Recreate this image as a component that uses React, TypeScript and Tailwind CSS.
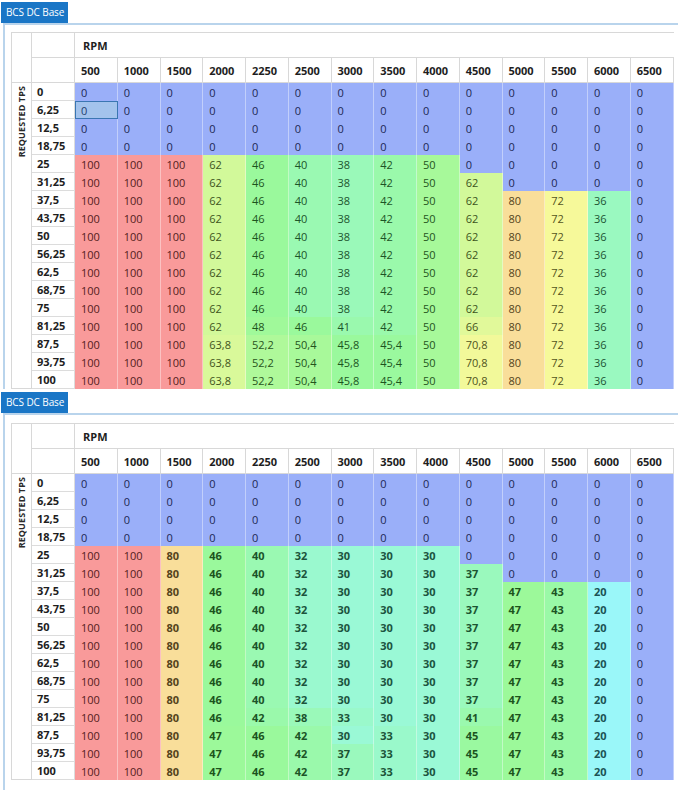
import React from "react";

const RPM = [500, 1000, 1500, 2000, 2250, 2500, 3000, 3500, 4000, 4500, 5000, 5500, 6000, 6500];
const TPS = ["0", "6,25", "12,5", "18,75", "25", "31,25", "37,5", "43,75", "50", "56,25", "62,5", "68,75", "75", "81,25", "87,5", "93,75", "100"];

const Z = [0, 0, 0, 0, 0, 0, 0, 0, 0, 0, 0, 0, 0, 0];

const topMid = [100, 100, 100, 62, 46, 40, 38, 42, 50, 62, 80, 72, 36, 0];
const topLate = [100, 100, 100, 63.8, 52.2, 50.4, 45.8, 45.4, 50, 70.8, 80, 72, 36, 0];
const TOP: number[][] = [
  Z, Z, Z, Z,
  [100, 100, 100, 62, 46, 40, 38, 42, 50, 0, 0, 0, 0, 0],
  [100, 100, 100, 62, 46, 40, 38, 42, 50, 62, 0, 0, 0, 0],
  topMid, topMid, topMid, topMid, topMid, topMid, topMid,
  [100, 100, 100, 62, 48, 46, 41, 42, 50, 66, 80, 72, 36, 0],
  topLate, topLate, topLate,
];

const botMid = [100, 100, 80, 46, 40, 32, 30, 30, 30, 37, 47, 43, 20, 0];
const BOT: number[][] = [
  Z, Z, Z, Z,
  [100, 100, 80, 46, 40, 32, 30, 30, 30, 0, 0, 0, 0, 0],
  [100, 100, 80, 46, 40, 32, 30, 30, 30, 37, 0, 0, 0, 0],
  botMid, botMid, botMid, botMid, botMid, botMid, botMid,
  [100, 100, 80, 46, 42, 38, 33, 30, 30, 41, 47, 43, 20, 0],
  [100, 100, 80, 47, 46, 42, 30, 33, 30, 45, 47, 43, 20, 0],
  [100, 100, 80, 47, 46, 42, 37, 33, 30, 45, 47, 43, 20, 0],
  [100, 100, 80, 47, 46, 42, 37, 33, 30, 45, 47, 43, 20, 0],
];

const hue = (v: number) => Math.max(0, 227 - 2.3 * v);
const bg = (v: number) => `hsl(${hue(v)} 88% 79%)`;
const fg = (v: number) => `hsl(${hue(v)} 50% 22%)`;
const fmt = (v: number) => String(v).replace(".", ",");

function Table({ data, boldMode, selected }: { data: number[][]; boldMode: boolean; selected?: [number, number] }) {
  return (
    <div className="grid grid-cols-[21px_43px_repeat(14,42.75px)] grid-rows-[26px_25px_repeat(17,18px)] text-[11px] leading-none text-[#1e1e1e]">
      <div className="row-span-2 border-l border-t border-r border-b border-[#d8d8d8]" />
      <div className="border-t border-r border-b border-[#d8d8d8]" />
      <div className="col-span-14 border-t border-b border-[#d8d8d8] flex items-center pl-[8px] font-bold">RPM</div>
      <div className="border-r border-b border-[#d8d8d8]" />
      {RPM.map((r) => (
        <div key={r} className="border-r border-b border-[#d8d8d8] flex items-center pl-[6px] font-bold">
          {r}
        </div>
      ))}
      <div className="row-span-17 border-l border-r border-b border-[#d8d8d8] flex flex-col items-center pt-[3px]">
        <span className="[writing-mode:vertical-rl] rotate-180 text-[9px] font-bold tracking-[0.1px] text-[#2a2a2a]">REQUESTED TPS</span>
      </div>
      {TPS.map((t, i) => (
        <React.Fragment key={t}>
          <div className="border-r border-b border-[#dcdcdc] flex items-center pl-[5px] font-bold">{t}</div>
          {data[i].map((v, j) => {
            const isSel = selected && selected[0] === i && selected[1] === j;
            const bold = boldMode && v !== 0 && v !== 100;
            if (isSel) {
              return (
                <div key={j} className="border border-[#3a76b2] bg-[#a3c3ec] text-[#24406e] flex items-center pl-[5px]">
                  {fmt(v)}
                </div>
              );
            }
            return (
              <div
                key={j}
                className={bold ? "border-r border-white/40 flex items-center pl-[6px] font-bold" : "border-r border-white/40 flex items-center pl-[6px]"}
                style={{ background: bg(v), color: fg(v) }}
              >
                {fmt(v)}
              </div>
            );
          })}
        </React.Fragment>
      ))}
    </div>
  );
}

function Tab() {
  return (
    <div className="ml-[1px] w-[67px] h-[21px] bg-[#1a76c6] text-white text-[10px] tracking-[-0.1px] flex items-center pl-[5px] whitespace-nowrap">
      BCS DC Base
    </div>
  );
}

export default function App() {
  return (
    <div className="w-[678px] h-[790px] bg-white overflow-hidden flex flex-col font-['Open_Sans',sans-serif]">
      <div className="pt-[2px]">
        <Tab />
        <div className="ml-[3px] border-t-2 border-l-2 border-[#b9d4ec] pl-[6px] pt-[7px]">
          <Table data={TOP} boldMode={false} selected={[1, 0]} />
        </div>
      </div>
      <div className="pt-[3px] flex-1 flex flex-col">
        <Tab />
        <div className="flex-1 ml-[3px] border-t-2 border-l-2 border-[#b9d4ec] pl-[6px] pt-[8px]">
          <Table data={BOT} boldMode={true} />
        </div>
      </div>
    </div>
  );
}
